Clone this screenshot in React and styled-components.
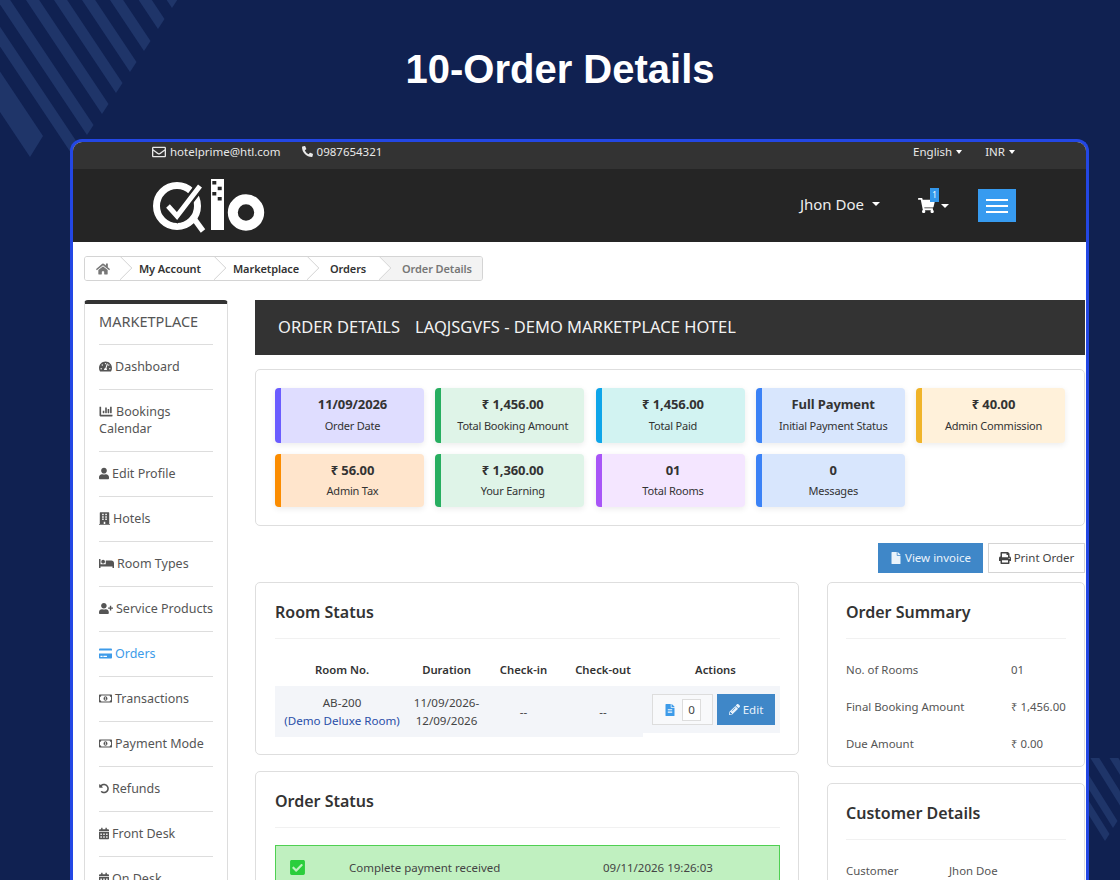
import React from 'react';
import styled, { createGlobalStyle } from 'styled-components';
import {
  FaRegEnvelope, FaPhoneAlt, FaHome, FaTachometerAlt, FaChartBar, FaUser, FaBuilding, FaBed,
  FaUserPlus, FaCreditCard, FaRegMoneyBillAlt, FaUndoAlt, FaCalendarAlt, FaFile, FaPrint,
  FaPencilAlt, FaFileAlt, FaShoppingCart, FaCheckSquare,
} from 'react-icons/fa';

const GlobalStyle = createGlobalStyle`
  html, body {
    margin: 0;
    height: 880px;
    overflow: hidden;
    background: #102151;
    font-family: "Noto Sans", "Open Sans", sans-serif;
  }
  * { box-sizing: border-box; }
`;

const Page = styled.div`
  position: relative;
  width: 1120px;
  height: 880px;
  overflow: hidden;
`;

const Stripes = styled.svg`
  position: absolute;
  left: 0;
  top: 0;
`;

const Title = styled.h1`
  position: relative;
  margin: 0;
  height: 139px;
  padding-top: 44px;
  text-align: center;
  font: 700 40px/50px "Liberation Sans", Arial, sans-serif;
  color: #fff;
`;

const Frame = styled.div`
  position: relative;
  width: 1019px;
  height: 760px;
  margin-left: 70px;
  border: 3px solid #2347e4;
  border-bottom: 0;
  border-radius: 12px 12px 0 0;
  background: #fff;
  overflow: hidden;
`;

const TopBar = styled.div`
  display: flex;
  align-items: center;
  height: 27px;
  padding: 0 71px 8px 79px;
  background: #333;
  color: #e8e8e8;
  font-size: 11.5px;
`;

const TopItem = styled.span`
  display: flex;
  align-items: center;
  gap: 4px;
  margin-right: ${p => p.$gap || 0}px;
  margin-left: ${p => (p.$push ? 'auto' : '0')};
  svg { font-size: ${p => p.$icon || 14}px; }
`;

const Caret = styled.i`
  display: inline-block;
  width: 0;
  height: 0;
  margin-left: ${p => p.$left ?? 3}px;
  border-left: ${p => p.$size || 3.5}px solid transparent;
  border-right: ${p => p.$size || 3.5}px solid transparent;
  border-top: 4px solid #fff;
`;

const Header = styled.div`
  display: flex;
  align-items: center;
  height: 73px;
  padding: 0 70px 0 79px;
  background: #252525;
  color: #eee;
`;

const UserMenu = styled.div`
  display: flex;
  align-items: center;
  margin-left: auto;
  padding-bottom: 3px;
  font-size: 15px;
`;

const Cart = styled.div`
  position: relative;
  display: flex;
  align-items: center;
  margin-left: 38px;
  color: #fff;
  font-size: 17px;
`;

const CartBadge = styled.span`
  position: absolute;
  left: 12px;
  top: -9px;
  width: 9px;
  height: 14px;
  background: #3498eb;
  font-size: 8px;
  line-height: 13px;
  text-align: center;
`;

const MenuButton = styled.button`
  display: flex;
  flex-direction: column;
  justify-content: center;
  gap: 4px;
  width: 38px;
  height: 33px;
  margin-left: 29px;
  padding: 0 8px;
  border: 0;
  background: #379bf0;
  span { display: block; height: 2px; background: #fff; }
`;

const Body = styled.div`
  padding: 14px 1px 0 11px;
`;

const Crumbs = styled.div`
  display: inline-flex;
  height: 25px;
  border: 1px solid #d4d4d4;
  border-radius: 3px;
  overflow: hidden;
  font-size: 11px;
  font-weight: 600;
  letter-spacing: -0.1px;
  color: #333;
`;

const Crumb = styled.div`
  position: relative;
  display: flex;
  align-items: center;
  width: ${p => p.$w}px;
  padding-left: ${p => p.$pad}px;
  background: ${p => (p.$last ? '#f3f3f3' : '#fff')};
  color: ${p => (p.$last ? '#777' : '#333')};
  svg { font-size: 14px; color: #777; }
  &:not(:last-child)::after {
    content: '';
    position: absolute;
    right: -8px;
    top: 2px;
    width: 17px;
    height: 17px;
    background: #fff;
    border-top: 1px solid #d8d8d8;
    border-right: 1px solid #d8d8d8;
    transform: rotate(45deg);
    clip-path: polygon(0 0, 100% 0, 100% 100%);
    z-index: 1;
  }
`;

const Columns = styled.div`
  display: grid;
  grid-template-columns: 144px 830px;
  gap: 27px;
  margin-top: 19px;
`;

const Sidebar = styled.aside`
  height: 640px;
  padding: 0 14px;
  border: 1px solid #ddd;
  border-top: 4px solid #333;
  border-radius: 4px 4px 0 0;
  color: #555;
`;

const SideTitle = styled.div`
  height: 41px;
  padding-top: 7px;
  border-bottom: 1px solid #ddd;
  font-size: 14.5px;
  line-height: 20px;
`;

const SideItem = styled.div`
  padding: 13px 0 14px;
  border-bottom: 1px solid #ddd;
  font-size: 12.5px;
  line-height: 17px;
  color: ${p => (p.$active ? '#3d9be9' : '#555')};
  svg { width: ${p => p.$icon}px; height: 13px; margin-right: 3px; vertical-align: -2px; }
`;

const MainCol = styled.main`
  min-width: 0;
`;

const PageHead = styled.div`
  display: flex;
  align-items: center;
  gap: 15px;
  height: 55px;
  padding: 0 0 2px 23px;
  background: #333;
  color: #f2f2f2;
  font-size: 16.5px;
`;

const Panel = styled.section`
  border: 1px solid #dedede;
  border-radius: 5px;
  background: #fff;
`;

const StatPanel = styled(Panel)`
  display: grid;
  grid-template-columns: repeat(5, 149px);
  grid-auto-rows: auto;
  column-gap: 11.25px;
  row-gap: 11px;
  height: 157px;
  margin-top: 14px;
  padding: 18px 19px;
  align-content: start;
`;

const Stat = styled.div`
  height: ${p => p.$h}px;
  padding-top: 7px;
  border-left: 6px solid ${p => p.$edge};
  border-radius: 4px;
  background: ${p => p.$bg};
  box-shadow: 0 2px 6px rgba(0, 0, 0, 0.08);
  text-align: center;
  color: #333;
`;

const StatValue = styled.div`
  font-size: 13px;
  font-weight: 700;
  letter-spacing: -0.1px;
  line-height: 18px;
`;

const StatLabel = styled.div`
  margin-top: ${p => p.$gap}px;
  font-size: 11px;
  letter-spacing: -0.2px;
  line-height: 16px;
`;

const ActionRow = styled.div`
  display: flex;
  justify-content: flex-end;
  gap: 5px;
  margin-top: 17px;
`;

const Button = styled.button`
  display: flex;
  align-items: center;
  justify-content: center;
  gap: 3px;
  width: ${p => p.$w}px;
  height: 30px;
  padding: 0 0 1px;
  border: 1px solid ${p => (p.$primary ? '#3f87c8' : '#d4d4d4')};
  background: ${p => (p.$primary ? '#3f87c8' : '#fff')};
  color: ${p => (p.$primary ? '#eaf3fb' : '#444')};
  font: 11.5px "Noto Sans", sans-serif;
  svg { font-size: 12px; }
`;

const Split = styled.div`
  display: grid;
  grid-template-columns: 544px 258px;
  gap: 28px;
  margin-top: 9px;
`;

const Stack = styled.div`
  display: flex;
  flex-direction: column;
  gap: ${p => p.$gap}px;
`;

const Card = styled(Panel)`
  height: ${p => p.$h}px;
  padding: 0 18px 0 19px;
`;

const SideCard = styled(Card)`
  padding: 0 18px;
`;

const CardTitle = styled.h2`
  height: 56px;
  margin: 0;
  padding-top: 17px;
  border-bottom: 1px solid #f1f1f1;
  font-size: 16px;
  font-weight: 600;
  line-height: 24px;
  color: #333;
`;

const Table = styled.div`
  margin-top: 21px;
  color: #444;
  font-size: 11.6px;
`;

const HeadRow = styled.div`
  display: grid;
  grid-template-columns: 134px 75px 79px 80px 137px;
  height: 26px;
  text-align: center;
  font-size: 11.3px;
  font-weight: 600;
  line-height: 20px;
  color: #333;
`;

const ActionsHead = styled.span`
  padding-left: 8px;
`;

const RoomRow = styled.div`
  display: grid;
  grid-template-columns: 134px 75px 79px 80px 137px;
  align-items: start;
  text-align: center;
`;

const Cell = styled.div`
  height: 51px;
  padding-top: ${p => (p.$mid ? 17 : 8)}px;
  line-height: 17.5px;
  background: #f3f5f9;
`;

const RoomType = styled.div`
  color: #2a4fa8;
`;

const ActionCell = styled.div`
  display: flex;
  justify-content: flex-end;
  gap: 4px;
  height: 47px;
  padding: 8px 5px;
  background: #f3f5f9;
`;

const NotesBox = styled.div`
  display: flex;
  align-items: center;
  justify-content: center;
  gap: 6px;
  width: 61px;
  height: 31px;
  border: 1px solid #ddd;
  background: #f8f9fb;
  svg { color: #3d9be9; font-size: 12px; }
  span {
    width: 19px;
    height: 22px;
    border: 1px solid #ddd;
    background: #fff;
    line-height: 20px;
  }
`;

const EditButton = styled(Button)`
  height: 31px;
  svg { font-size: 11px; }
`;

const StatusAlert = styled.div`
  display: grid;
  grid-template-columns: 60px 254px 1fr;
  align-items: center;
  height: 60px;
  margin-top: 17px;
  padding: 0 13px 16px;
  border: 1px solid #4fd052;
  background: #c0f0c0;
  font-size: 11.5px;
  color: #444;
  svg { color: #2bce3c; font-size: 17px; }
`;

const SummaryList = styled.div`
  padding-top: 12px;
`;

const SummaryRow = styled.div`
  display: flex;
  height: 37px;
  align-items: center;
  font-size: 11.4px;
  white-space: nowrap;
  color: #555;
`;

const SummaryLabel = styled.span`
  width: ${p => p.$w}px;
  flex: none;
`;

const stripeTips = [
  [172, 8], [158, 29], [144, 51], [130, 72], [116, 93], [102, 114], [87, 135], [73, 156],
];

const lowerTips = [[1105, 841], [1113, 828], [1126, 815], [1137, 802]];

function stripe([x, y], w, h) {
  return `M${x} ${y} L${x + w} ${y - h} L${x + w - 200} ${y - h - 300} L${x - 200} ${y - 300} Z`;
}

function lowerStripe([x, y]) {
  return `M${x} ${y} L${x + 4.5} ${y - 7} L${x + 4.5 - 100} ${y - 7 - 160} L${x - 100} ${y - 160} Z`;
}

const stats = [
  { value: '11/09/2026', label: 'Order Date', edge: '#6a5cff', bg: '#dfddff', h: 55 },
  { value: '₹ 1,456.00', label: 'Total Booking Amount', edge: '#27ae60', bg: '#dff4e8', h: 55 },
  { value: '₹ 1,456.00', label: 'Total Paid', edge: '#0ea5e9', bg: '#d2f3f2', h: 55 },
  { value: 'Full Payment', label: 'Initial Payment Status', edge: '#3b82f6', bg: '#d8e6fd', h: 55 },
  { value: '₹ 40.00', label: 'Admin Commission', edge: '#f0b429', bg: '#fff1da', h: 55 },
  { value: '₹ 56.00', label: 'Admin Tax', edge: '#fb8c00', bg: '#ffe5cc', h: 53 },
  { value: '₹ 1,360.00', label: 'Your Earning', edge: '#27ae60', bg: '#dff4e8', h: 53 },
  { value: '01', label: 'Total Rooms', edge: '#a855f7', bg: '#f4e6ff', h: 53 },
  { value: '0', label: 'Messages', edge: '#3b82f6', bg: '#d8e6fd', h: 53 },
];

const menu = [
  { icon: <FaTachometerAlt />, w: 13, text: 'Dashboard' },
  { icon: <FaChartBar />, w: 14, text: 'Bookings Calendar' },
  { icon: <FaUser />, w: 10, text: 'Edit Profile' },
  { icon: <FaBuilding />, w: 11, text: 'Hotels' },
  { icon: <FaBed />, w: 15, text: 'Room Types' },
  { icon: <FaUserPlus />, w: 14, text: 'Service Products' },
  { icon: <FaCreditCard />, w: 13, text: 'Orders', active: true },
  { icon: <FaRegMoneyBillAlt />, w: 13, text: 'Transactions' },
  { icon: <FaRegMoneyBillAlt />, w: 13, text: 'Payment Mode' },
  { icon: <FaUndoAlt />, w: 10, text: 'Refunds' },
  { icon: <FaCalendarAlt />, w: 10, text: 'Front Desk' },
  { icon: <FaCalendarAlt />, w: 10, text: 'On Desk' },
];

function Logo() {
  return (
    <svg width="114" height="56" viewBox="152 177 114 56">
      <circle cx="177" cy="205" r="20.5" fill="none" stroke="#fff" strokeWidth="7" />
      <path d="M168 205 L177 215 L200 185" fill="none" stroke="#252525" strokeWidth="10" />
      <path d="M168 205 L177 215 L200 185" fill="none" stroke="#fff" strokeWidth="5" />
      <path d="M192 215 L203 230" fill="none" stroke="#fff" strokeWidth="5.5" />
      <rect x="211" y="178" width="13" height="51" fill="#fff" />
      <g fill="#252525">
        <rect x="212.3" y="180" width="4" height="3.5" />
        <rect x="217.7" y="185.7" width="4" height="3.5" />
        <rect x="212.3" y="191" width="4" height="3.5" />
        <rect x="217.7" y="196" width="4" height="3.5" />
      </g>
      <circle cx="246" cy="211.5" r="13.2" fill="none" stroke="#fff" strokeWidth="10" />
    </svg>
  );
}

export default function App() {
  return (
    <Page>
      <GlobalStyle />
      <Stripes width="1120" height="880" viewBox="0 0 1120 880">
        <defs>
          <clipPath id="lowerStripes"><rect x="1085" y="758" width="35" height="100" /></clipPath>
        </defs>
        <g fill="#1f3569">
          {stripeTips.map(t => <path key={t[0]} d={stripe(t, 6.5, 10)} />)}
          <path d={stripe([30, 157], 13, 21)} />
        </g>
        <g fill="#1f3569" clipPath="url(#lowerStripes)">
          {lowerTips.map(t => <path key={t[0]} d={lowerStripe(t)} />)}
        </g>
      </Stripes>
      <Title>10-Order Details</Title>
      <Frame>
        <TopBar>
          <TopItem $gap={21}><FaRegEnvelope />hotelprime@htl.com</TopItem>
          <TopItem $icon={11}><FaPhoneAlt />0987654321</TopItem>
          <TopItem $push $gap={23}>English<Caret $left={0} /></TopItem>
          <TopItem>INR<Caret $left={0} /></TopItem>
        </TopBar>
        <Header>
          <Logo />
          <UserMenu>Jhon Doe<Caret $left={8} $size={4} /></UserMenu>
          <Cart>
            <FaShoppingCart />
            <CartBadge>1</CartBadge>
            <Caret $left={6} $size={4} />
          </Cart>
          <MenuButton aria-label="Menu"><span /><span /><span /></MenuButton>
        </Header>
        <Body>
          <Crumbs>
            <Crumb $w={36} $pad={11}><FaHome /></Crumb>
            <Crumb $w={94} $pad={18}>My Account</Crumb>
            <Crumb $w={93} $pad={18}>Marketplace</Crumb>
            <Crumb $w={72} $pad={22}>Orders</Crumb>
            <Crumb $w={102} $pad={22} $last>Order Details</Crumb>
          </Crumbs>
          <Columns>
            <Sidebar>
              <SideTitle>MARKETPLACE</SideTitle>
              {menu.map(m => (
                <SideItem key={m.text} $active={m.active} $icon={m.w}>{m.icon}{m.text}</SideItem>
              ))}
            </Sidebar>
            <MainCol>
              <PageHead>
                <span>ORDER DETAILS</span>
                <span>LAQJSGVFS - DEMO MARKETPLACE HOTEL</span>
              </PageHead>
              <StatPanel>
                {stats.map(s => (
                  <Stat key={s.label} $edge={s.edge} $bg={s.bg} $h={s.h}>
                    <StatValue>{s.value}</StatValue>
                    <StatLabel $gap={s.h === 55 ? 5 : 4}>{s.label}</StatLabel>
                  </Stat>
                ))}
              </StatPanel>
              <ActionRow>
                <Button $primary $w={105}><FaFile />View invoice</Button>
                <Button $w={97}><FaPrint />Print Order</Button>
              </ActionRow>
              <Split>
                <Stack $gap={16}>
                  <Card $h={173}>
                    <CardTitle>Room Status</CardTitle>
                    <Table>
                      <HeadRow>
                        <span>Room No.</span>
                        <span>Duration</span>
                        <span>Check-in</span>
                        <span>Check-out</span>
                        <ActionsHead>Actions</ActionsHead>
                      </HeadRow>
                      <RoomRow>
                        <Cell>AB-200<RoomType>(Demo Deluxe Room)</RoomType></Cell>
                        <Cell>11/09/2026-<br />12/09/2026</Cell>
                        <Cell $mid>--</Cell>
                        <Cell $mid>--</Cell>
                        <ActionCell>
                          <NotesBox><FaFileAlt /><span>0</span></NotesBox>
                          <EditButton $primary $w={58}><FaPencilAlt />Edit</EditButton>
                        </ActionCell>
                      </RoomRow>
                    </Table>
                  </Card>
                  <Card $h={200}>
                    <CardTitle>Order Status</CardTitle>
                    <StatusAlert>
                      <FaCheckSquare />
                      <span>Complete payment received</span>
                      <span>09/11/2026 19:26:03</span>
                    </StatusAlert>
                  </Card>
                </Stack>
                <Stack $gap={16}>
                  <SideCard $h={185}>
                    <CardTitle>Order Summary</CardTitle>
                    <SummaryList>
                      <SummaryRow><SummaryLabel $w={165}>No. of Rooms</SummaryLabel>01</SummaryRow>
                      <SummaryRow><SummaryLabel $w={165}>Final Booking Amount</SummaryLabel>₹ 1,456.00</SummaryRow>
                      <SummaryRow><SummaryLabel $w={165}>Due Amount</SummaryLabel>₹ 0.00</SummaryRow>
                    </SummaryList>
                  </SideCard>
                  <SideCard $h={200}>
                    <CardTitle>Customer Details</CardTitle>
                    <SummaryList>
                      <SummaryRow><SummaryLabel $w={103}>Customer</SummaryLabel>Jhon Doe</SummaryRow>
                    </SummaryList>
                  </SideCard>
                </Stack>
              </Split>
            </MainCol>
          </Columns>
        </Body>
      </Frame>
    </Page>
  );
}
